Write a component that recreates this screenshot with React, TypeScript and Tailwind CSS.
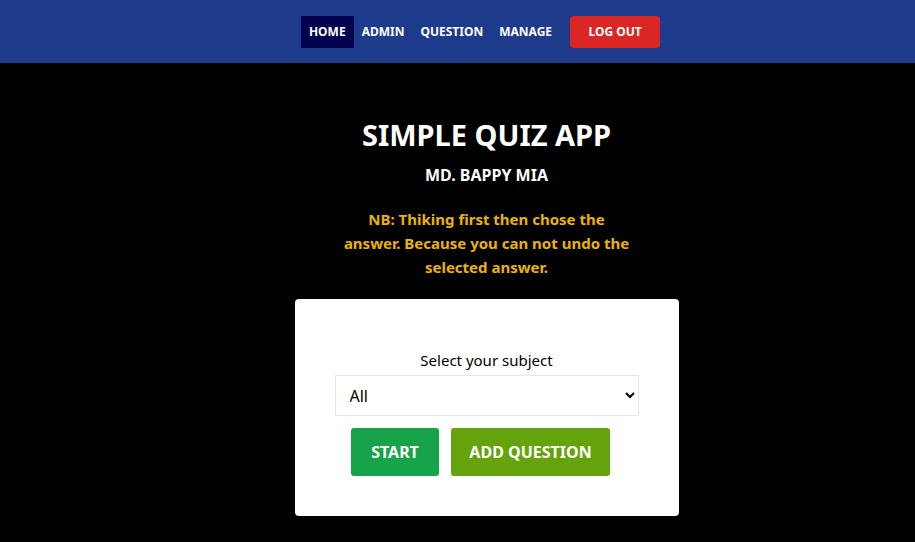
import { useState } from 'react'

const navItems = ['HOME', 'ADMIN', 'QUESTION', 'MANAGE']

function NavBar() {
  return (
    <nav className="flex h-[63px] items-center justify-center bg-[#1e3a8a] pl-[46px]">
      <ul role="list" className="flex items-center">
        {navItems.map((item, i) => (
          <li key={item}>
            <a
              href="#"
              className={
                i === 0
                  ? 'block bg-[#010150] px-2 py-[7px] text-[12px] leading-[18px] font-bold text-white'
                  : 'block px-2 py-[7px] text-[12px] leading-[18px] font-bold text-white'
              }
            >
              {item}
            </a>
          </li>
        ))}
      </ul>
      <button className="ml-[10px] h-8 w-[90px] rounded-[4px] bg-[#dc2626] text-[12px] font-bold text-white">
        LOG OUT
      </button>
    </nav>
  )
}

export default function App() {
  const [subject, setSubject] = useState('All')

  return (
    <div
      className="min-h-[542px] bg-black"
      style={{ fontFamily: '"Noto Sans", "Open Sans", sans-serif' }}
    >
      <NavBar />
      <main className="flex flex-col items-center pt-[52px] pl-[58px]">
        <h1 className="text-[29px] leading-[40px] font-bold text-white">SIMPLE QUIZ APP</h1>
        <h2 className="mt-[8px] text-[16px] leading-[24px] font-bold text-white">MD. BAPPY MIA</h2>
        <p className="mt-[20px] text-center text-[15px] leading-[24px] font-bold text-[#eab308]">
          NB: Thiking first then chose the
          <br />
          answer. Because you can not undo the
          <br />
          selected answer.
        </p>
        <div className="mt-[20px] flex w-96 flex-col items-center rounded-[4px] bg-white px-10 pt-[49px] pb-10">
          <label className="text-[15px] leading-[24px] text-black">Select your subject</label>
          <select
            value={subject}
            onChange={(e) => setSubject(e.target.value)}
            className="mt-[3px] h-[41px] w-full border border-[#e5e7eb] bg-white px-[10px] text-[16px] text-black"
          >
            <option>All</option>
            <option>Math</option>
            <option>English</option>
            <option>Science</option>
          </select>
          <div className="mt-3 flex gap-3 pr-3">
            <button className="h-12 w-[88px] rounded-[3px] bg-[#16a34a] text-[16px] font-bold text-white">
              START
            </button>
            <button className="h-12 w-[159px] rounded-[3px] bg-[#65a30d] text-[16px] font-bold text-white">
              ADD QUESTION
            </button>
          </div>
        </div>
      </main>
    </div>
  )
}
